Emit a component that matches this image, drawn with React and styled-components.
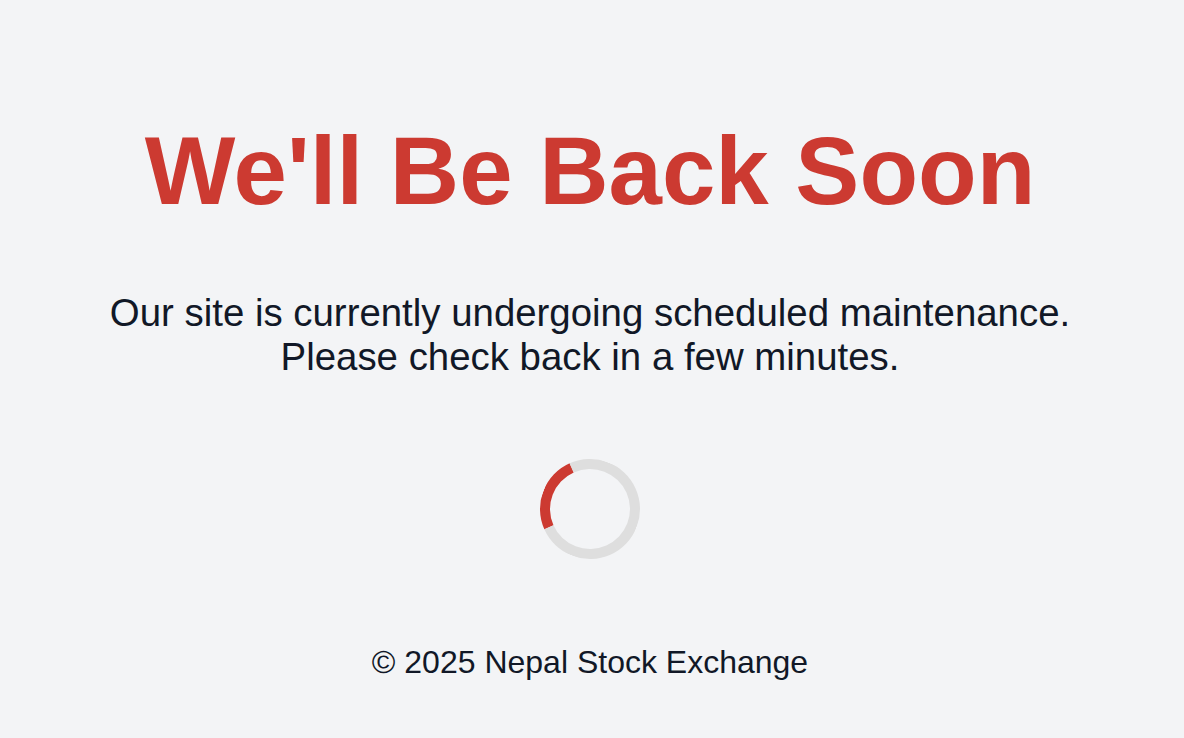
import React from 'react';
import styled, { createGlobalStyle } from 'styled-components';

const GlobalStyle = createGlobalStyle`
  html, body {
    margin: 0;
    padding: 0;
    background-color: #f3f4f6;
  }
  body {
    font-family: "Liberation Sans", Arial, Helvetica, sans-serif;
    color: #111827;
  }
`;

const Page = styled.div`
  min-height: 100vh;
  box-sizing: border-box;
  padding: 116px 4px 0 0;
  display: flex;
  flex-direction: column;
  align-items: center;
  text-align: center;
`;

const Title = styled.h1`
  margin: 0;
  font-size: 96px;
  font-weight: 700;
  color: #cc3a31;
`;

const Message = styled.p`
  margin: 65px 0 0;
  font-size: 38.4px;
  color: #111827;
`;

const Spinner = styled.div`
  margin-top: 80px;
  width: 80px;
  height: 80px;
  border: 10px solid #dedede;
  border-top-color: #cc3a31;
  border-radius: 50%;
  transform: rotate(-69deg);
`;

const Footer = styled.footer`
  margin-top: 85px;
  font-size: 32px;
  color: #111827;
`;

function App() {
  return (
    <>
      <GlobalStyle />
      <Page>
        <Title>We'll Be Back Soon</Title>
        <Message>
          Our site is currently undergoing scheduled maintenance.
          <br />
          Please check back in a few minutes.
        </Message>
        <Spinner />
        <Footer>&copy; 2025 Nepal Stock Exchange</Footer>
      </Page>
    </>
  );
}

export default App;
